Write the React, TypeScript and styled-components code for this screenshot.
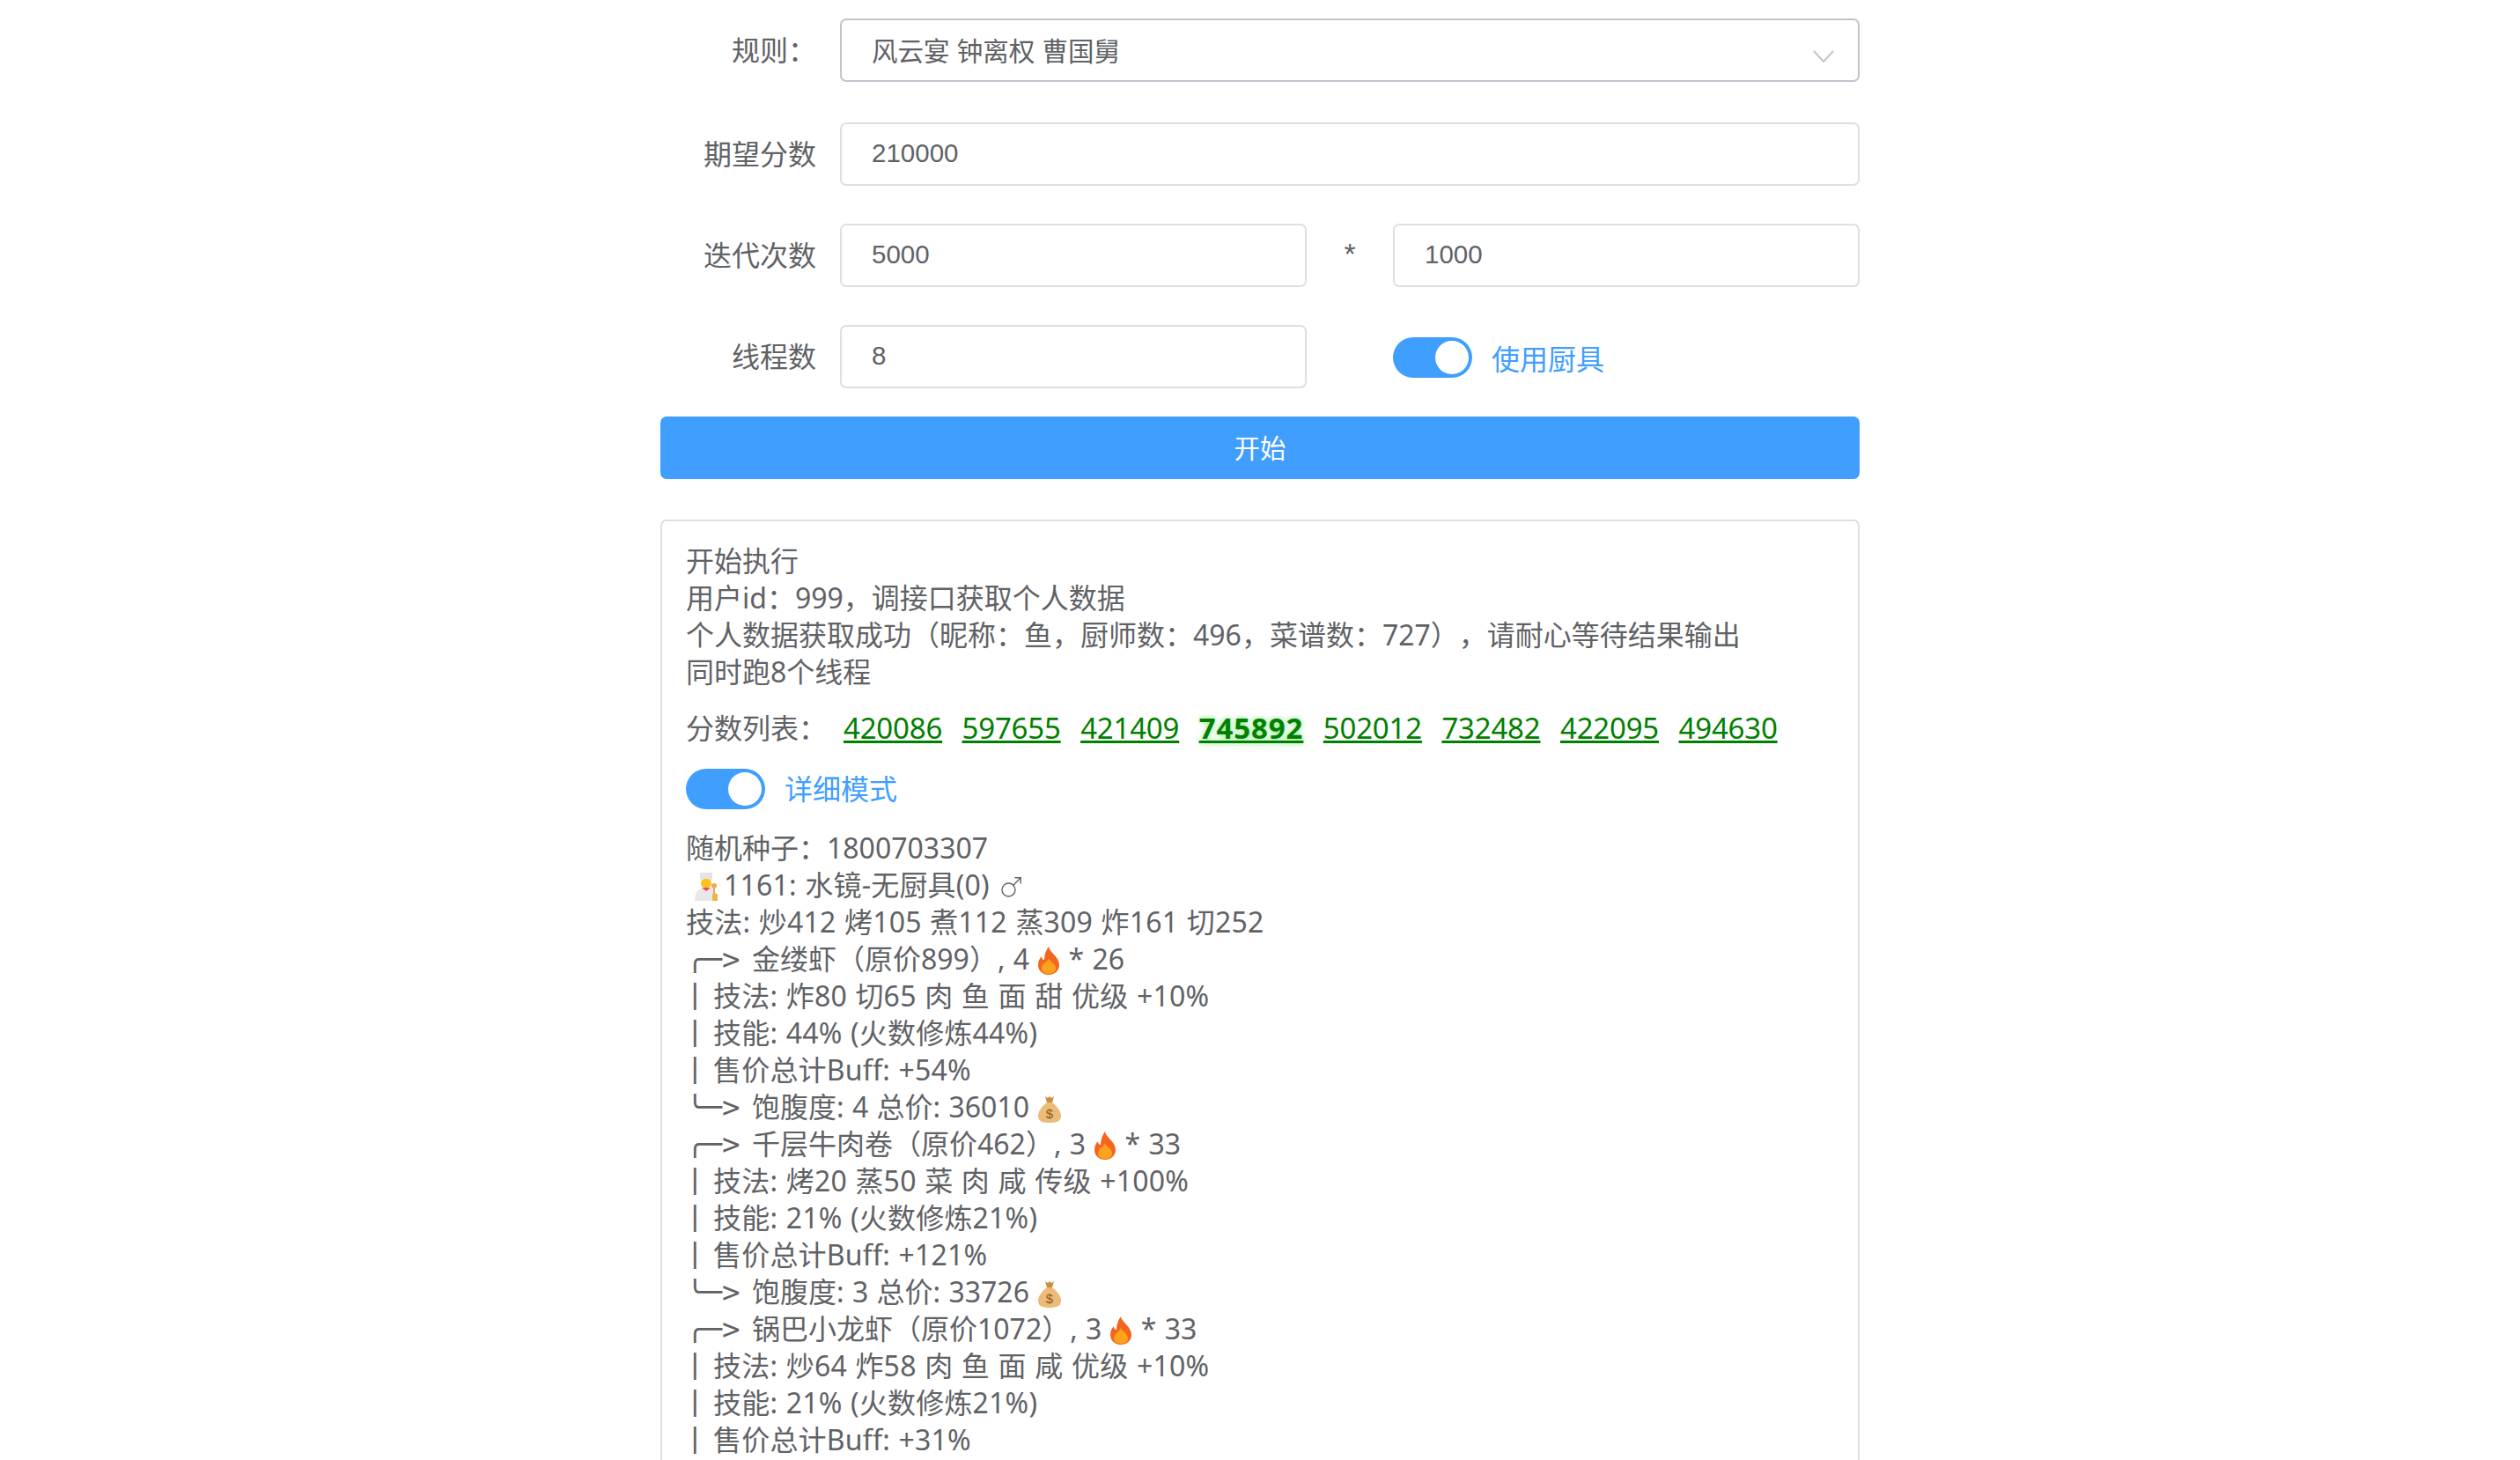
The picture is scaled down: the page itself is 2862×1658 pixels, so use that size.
import React from 'react';
import styled, {createGlobalStyle} from 'styled-components';
import {Mars} from 'lucide-react';

const GlobalStyle = createGlobalStyle`
    html, body {
        margin: 0;
        height: 1658px;
        overflow: hidden;
        background: #fff;
    }
`;

const Wrapper = styled.main`
    width: 1362px;
    margin: 0 auto;
    padding-top: 21px;
    font-family: "Liberation Sans", "Noto Sans CJK SC", sans-serif;
    color: #606266;
    text-spacing-trim: space-all;
`;

const FormRow = styled.div`
    display: grid;
    grid-template-columns: 204px 530px 98px 530px;
    align-items: center;
    height: 72px;
    margin-bottom: 43px;
    &:first-child {
        margin-bottom: 46px;
    }
    &:nth-child(4) {
        margin-bottom: 32px;
    }
`;

const Label = styled.label`
    padding: 0 27px 4px 0;
    text-align: right;
    font-size: 32px;
`;

const Field = styled.div<{$wide?: boolean; $strong?: boolean}>`
    position: relative;
    box-sizing: border-box;
    grid-column: ${(p) => (p.$wide ? '2 / 5' : 'auto')};
    height: 72px;
    padding: 0 36px 0 34px;
    border: 2px solid ${(p) => (p.$strong ? '#c0c4cc' : '#dcdfe6')};
    border-radius: 7px;
    background: #fff;
    font-size: 29.5px;
    line-height: ${(p) => (p.$strong ? '72px' : '66px')};
    white-space: nowrap;
`;

const Chevron = styled.svg`
    position: absolute;
    top: 34px;
    right: 27px;
    width: 24px;
    height: 14px;
`;

const Star = styled.span`
    height: 71px;
    font-size: 34px;
    line-height: 66px;
    text-align: center;
`;

const SwitchRow = styled.div<{$compact?: boolean}>`
    display: flex;
    align-items: center;
    gap: 22px;
    color: #409eff;
    font-size: 32px;
    font-family: "Noto Sans", "Noto Sans CJK SC", sans-serif;
    ${(p) => (p.$compact ? 'height: 46px; margin: 25px 0 23px;' : 'padding-top: 2px;')}
`;

const Toggle = styled.span`
    position: relative;
    flex: none;
    display: block;
    width: 90px;
    height: 46px;
    border-radius: 23px;
    background: #409eff;
    &::after {
        content: "";
        position: absolute;
        top: 4px;
        right: 4px;
        width: 38px;
        height: 38px;
        border-radius: 50%;
        background: #fff;
    }
`;

const StartButton = styled.button`
    display: block;
    width: 100%;
    height: 71px;
    padding: 0 0 4px;
    border: 0;
    border-radius: 7px;
    background: #409eff;
    color: #fff;
    font-family: inherit;
    font-size: 29.5px;
`;

const OutputBox = styled.section`
    box-sizing: border-box;
    margin-top: 46px;
    padding: 24px 27px;
    border: 2px solid #dcdfe6;
    border-radius: 7px;
    height: 1200px;
    font-family: "Noto Sans", "Noto Sans CJK SC", sans-serif;
    font-size: 32px;
    line-height: 42px;
    color: #606266;
    word-spacing: 1px;
`;

const Line = styled.div<{$tight?: boolean}>`
    white-space: pre;
    height: 42px;
    letter-spacing: ${(p) => (p.$tight ? '0' : '0.2px')};
`;

const ScoreRow = styled.div`
    display: flex;
    align-items: center;
    height: 42px;
    margin-top: 22px;
    white-space: pre;
`;

const ScoreTitle = styled.span`
    width: 179px;
`;

const ScoreLink = styled.a<{$best?: boolean}>`
    margin-right: 22.5px;
    color: green;
    text-decoration: underline;
    font-family: "Noto Sans", sans-serif;
    font-size: 33px;
    font-weight: ${(p) => (p.$best ? 700 : 400)};
    letter-spacing: ${(p) => (p.$best ? '0.9px' : '-0.2px')};
    text-shadow: ${(p) => (p.$best ? '0 0 6px #7fe87f' : 'none')};
`;

const Tree = styled.span<{$bar?: boolean}>`
    display: inline-block;
    width: ${(p) => (p.$bar ? '31px' : '75px')};
    font-family: "DejaVu Sans Mono", monospace;
    font-size: 34px;
    line-height: 42px;
    letter-spacing: 0;
    vertical-align: top;
    clip-path: inset(6px 0 5px 0);
`;

const Emoji = styled.svg<{$w: number; $h: number; $after: number}>`
    display: inline-block;
    width: ${(p) => p.$w}px;
    height: ${(p) => p.$h}px;
    margin: 0 ${(p) => p.$after}px 0 10px;
    vertical-align: -6px;
`;

const GenderIcon = styled(Mars)`
    color: #606266;
    vertical-align: -6px;
`;

const Fire = () => (
    <Emoji $w={24} $h={32} $after={1} viewBox="0 0 24 32">
        <path d="M12 0c1 7 12 11 12 21 0 6-5 11-12 11S0 27 0 21c0-5 2-8 4-10 0 2 1 4 3 4 0-6 2-11 5-15z" fill="#f4661e" />
        <path d="M12 13c1 4 8 6 8 12 0 3-3 6-8 6s-8-3-8-6c0-6 7-8 8-12z" fill="#fca21c" />
    </Emoji>
);

const Bag = () => (
    <Emoji $w={26} $h={30} $after={0} viewBox="0 0 26 30">
        <path d="M8 0l3 2 2-2 2 2 3-2-2 7h-6z" fill="#c98f3e" />
        <path d="M10 7h6c4 3 10 9 10 15 0 6-4 8-13 8S0 28 0 22C0 16 6 10 10 7z" fill="#ecbb7a" />
        <text x="13" y="25" fontSize="15" textAnchor="middle" fill="#8a5a1c" fontFamily="Liberation Sans">$</text>
    </Emoji>
);

const Chef = () => (
    <Emoji $w={27} $h={32} $after={6} viewBox="0 0 27 32">
        <path d="M6 0h14v8H6z" fill="#e4e4e4" />
        <path d="M13 7c4 0 6 2 6 5s-2 5-6 5-6-2-6-5 2-5 6-5z" fill="#fcc21b" />
        <path d="M0 32c0-10 4-15 13-15s12 4 12 15z" fill="#e8e8e8" />
        <path d="M8 17h10l-5 4z" fill="#f2465a" />
        <circle cx="22" cy="15" r="3" fill="#e7a95c" />
        <path d="M21 18h2v6h-2z" fill="#e7a95c" />
        <rect x="20" y="24" width="6" height="8" rx="1" fill="#f3b33e" />
    </Emoji>
);

const scores = [
    {value: '420086'},
    {value: '597655'},
    {value: '421409'},
    {value: '745892', best: true},
    {value: '502012'},
    {value: '732482'},
    {value: '422095'},
    {value: '494630'},
];

const Dish = ({name, flame, dishBody, total}: {name: string; flame: string; dishBody: string[]; total: string}) => (
    <>
        <Line $tight><Tree>╭─&gt;</Tree>{name}<Fire />{flame}</Line>
        {dishBody.map((text) => (
            <Line key={text}><Tree $bar>│</Tree>{text}</Line>
        ))}
        <Line $tight><Tree>╰─&gt;</Tree>{total}<Bag /></Line>
    </>
);

const App = () => (
    <Wrapper>
        <GlobalStyle />
        <div>
            <FormRow>
                <Label>规则：</Label>
                <Field $wide $strong>
                    风云宴 钟离权 曹国舅
                    <Chevron viewBox="0 0 24 14">
                        <path d="M1 1l11 12L23 1" fill="none" stroke="#c0c4cc" strokeWidth="2" />
                    </Chevron>
                </Field>
            </FormRow>
            <FormRow>
                <Label>期望分数</Label>
                <Field $wide>210000</Field>
            </FormRow>
            <FormRow>
                <Label>迭代次数</Label>
                <Field>5000</Field>
                <Star>*</Star>
                <Field>1000</Field>
            </FormRow>
            <FormRow>
                <Label>线程数</Label>
                <Field>8</Field>
                <span />
                <SwitchRow>
                    <Toggle />
                    使用厨具
                </SwitchRow>
            </FormRow>
        </div>
        <StartButton>开始</StartButton>
        <OutputBox>
            <Line $tight>开始执行</Line>
            <Line $tight>用户id：999，调接口获取个人数据</Line>
            <Line $tight>个人数据获取成功（昵称：鱼，厨师数：496，菜谱数：727），请耐心等待结果输出</Line>
            <Line $tight>同时跑8个线程</Line>
            <ScoreRow>
                <ScoreTitle>分数列表：</ScoreTitle>
                {scores.map((s) => (
                    <ScoreLink key={s.value} $best={s.best}>{s.value}</ScoreLink>
                ))}
            </ScoreRow>
            <SwitchRow $compact>
                <Toggle />
                详细模式
            </SwitchRow>
            <Line $tight>随机种子：1800703307</Line>
            <Line><Chef />1161: 水镜-无厨具(0) <GenderIcon size={30} strokeWidth={1.1} /></Line>
            <Line>技法: 炒412 烤105 煮112 蒸309 炸161 切252</Line>
            <Dish
                name="金缕虾（原价899）, 4"
                flame=" * 26"
                dishBody={['技法: 炸80 切65 肉 鱼 面 甜 优级 +10%', '技能: 44% (火数修炼44%)', '售价总计Buff: +54%']}
                total="饱腹度: 4 总价: 36010"
            />
            <Dish
                name="千层牛肉卷（原价462）, 3"
                flame=" * 33"
                dishBody={['技法: 烤20 蒸50 菜 肉 咸 传级 +100%', '技能: 21% (火数修炼21%)', '售价总计Buff: +121%']}
                total="饱腹度: 3 总价: 33726"
            />
            <Line $tight><Tree>╭─&gt;</Tree>锅巴小龙虾（原价1072）, 3<Fire /> * 33</Line>
            <Line><Tree $bar>│</Tree>技法: 炒64 炸58 肉 鱼 面 咸 优级 +10%</Line>
            <Line><Tree $bar>│</Tree>技能: 21% (火数修炼21%)</Line>
            <Line><Tree $bar>│</Tree>售价总计Buff: +31%</Line>
        </OutputBox>
    </Wrapper>
);

export default App;
